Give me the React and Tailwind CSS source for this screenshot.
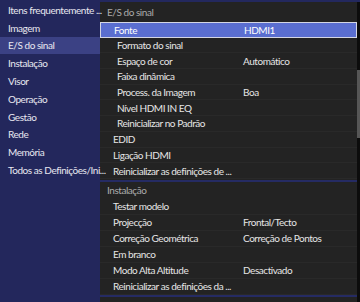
const leftItems = [
  'Itens frequentemente ...',
  'Imagem',
  'E/S do sinal',
  'Instalação',
  'Visor',
  'Operação',
  'Gestão',
  'Rede',
  'Memória',
  'Todos as Definições/Ini...',
]

const signalRows = [
  { label: 'Fonte', value: 'HDMI1', indent: 'pl-[13px]', selected: true },
  { label: 'Formato do sinal', indent: 'pl-[17px]' },
  { label: 'Espaço de cor', value: 'Automático', indent: 'pl-[17px]' },
  { label: 'Faixa dinâmica', indent: 'pl-[17px]' },
  { label: 'Process. da Imagem', value: 'Boa', indent: 'pl-[17px]' },
  { label: 'Nível HDMI IN EQ', indent: 'pl-[17px]' },
  { label: 'Reinicializar no Padrão', indent: 'pl-[17px]' },
  { label: 'EDID', indent: 'pl-[13px]' },
  { label: 'Ligação HDMI', indent: 'pl-[13px]' },
  { label: 'Reinicializar as definições de ...', indent: 'pl-[13px]' },
]

const installRows = [
  { label: 'Testar modelo' },
  { label: 'Projecção', value: 'Frontal/Tecto' },
  { label: 'Correção Geométrica', value: 'Correção de Pontos' },
  { label: 'Em branco' },
  { label: 'Modo Alta Altitude', value: 'Desactivado' },
  { label: 'Reinicializar as definições da ...' },
]

function Row({ row, height }) {
  return (
    <div
      className={`flex items-center ${height} border-b ${
        row.selected
          ? 'bg-[#5a6ed0] border border-[#d4d6e4] text-white'
          : 'border-[#292929] text-[#e6e6e6]'
      }`}
    >
      <div className={`w-[143px] shrink-0 whitespace-nowrap ${row.indent || 'pl-[13px]'}`}>{row.label}</div>
      <div className="whitespace-nowrap">{row.value || ''}</div>
    </div>
  )
}

export default function App() {
  return (
    <div
      className="w-[360px] h-[302px] overflow-hidden bg-[#232323] flex text-[10px] leading-[14px] tracking-[-0.45px]"
      style={{ fontFamily: 'Lato, "Noto Sans", sans-serif' }}
    >
      <div className="w-[100px] shrink-0 bg-[#23275c] pt-[1px] relative z-10">
        {leftItems.map((item, i) => (
          <div
            key={item}
            className={`h-[17.8px] flex items-center pl-[8px] whitespace-nowrap text-[#e8e8f0] ${
              i === 2 ? 'bg-[#3b4184]' : ''
            }`}
          >
            {item}
          </div>
        ))}
      </div>
      <div className="flex-1 min-w-0 flex flex-col">
        <div className="h-[2px] bg-[#23285e] shrink-0" />
        <div className="flex-1 flex min-h-0">
          <div className="flex-1 min-w-0 flex flex-col">
            <div className="h-[20px] flex items-center pl-[7px] text-[#ababab]">E/S do sinal</div>
            {signalRows.map((row) => (
              <Row key={row.label} row={row} height="h-[15.7px]" />
            ))}
            <div className="h-[2px] bg-[#252b63] mt-[1px]" />
            <div className="h-[17px] flex items-center pl-[7px] text-[#ababab]">Instalação</div>
            {installRows.map((row) => (
              <Row key={row.label} row={{ ...row, indent: 'pl-[13px]' }} height="h-[16px]" />
            ))}
            <div className="h-[2px] bg-[#252b63]" />
          </div>
          <div className="w-[3px] shrink-0 bg-[#0c0c0c] flex flex-col">
            <div className="h-[68px]" />
            <div className="h-[68px] bg-[#565656]" />
          </div>
        </div>
      </div>
    </div>
  )
}
